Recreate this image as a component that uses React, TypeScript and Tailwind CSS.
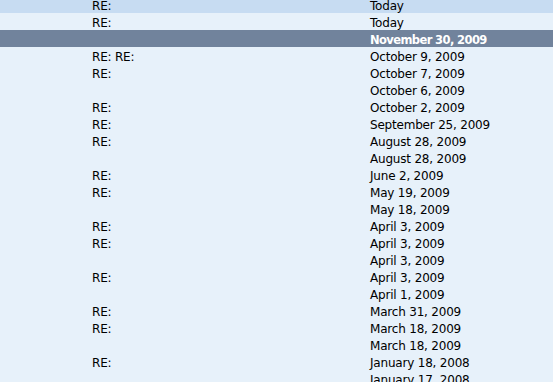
import React from 'react';

type Row = {
  subject: string;
  date: string;
};

const rows: Row[] = [
  { subject: 'RE:', date: 'Today' },
  { subject: 'RE:', date: 'Today' },
  { subject: '', date: 'November 30, 2009' },
  { subject: 'RE: RE:', date: 'October 9, 2009' },
  { subject: 'RE:', date: 'October 7, 2009' },
  { subject: '', date: 'October 6, 2009' },
  { subject: 'RE:', date: 'October 2, 2009' },
  { subject: 'RE:', date: 'September 25, 2009' },
  { subject: 'RE:', date: 'August 28, 2009' },
  { subject: '', date: 'August 28, 2009' },
  { subject: 'RE:', date: 'June 2, 2009' },
  { subject: 'RE:', date: 'May 19, 2009' },
  { subject: '', date: 'May 18, 2009' },
  { subject: 'RE:', date: 'April 3, 2009' },
  { subject: 'RE:', date: 'April 3, 2009' },
  { subject: '', date: 'April 3, 2009' },
  { subject: 'RE:', date: 'April 3, 2009' },
  { subject: '', date: 'April 1, 2009' },
  { subject: 'RE:', date: 'March 31, 2009' },
  { subject: 'RE:', date: 'March 18, 2009' },
  { subject: '', date: 'March 18, 2009' },
  { subject: 'RE:', date: 'January 18, 2008' },
  { subject: '', date: 'January 17, 2008' },
];

const SELECTED = 2;

const MessageList = () => {
  return (
    <div
      className="w-[553px] h-[382px] overflow-hidden bg-[#e7f1fa] text-[12px] text-black"
      style={{ fontFamily: '"DejaVu Sans", "Liberation Sans", sans-serif' }}
    >
      <div className="-mt-[4px] flex flex-col">
        {rows.map((row, i) => {
          const selected = i === SELECTED;
          const bg = selected
            ? 'bg-[#71839c] text-white font-bold text-[11.5px] tracking-[-0.6px]'
            : i === 0
              ? 'bg-[#c7dcf2] tracking-[-0.2px]'
              : 'tracking-[-0.2px]';
          return (
            <div key={i} className={`flex h-[17px] items-start pt-[3px] leading-[14px] ${bg}`}>
              <div className="w-[370px] shrink-0 pl-[92px] whitespace-nowrap">{row.subject}</div>
              <div className="whitespace-nowrap">{row.date}</div>
            </div>
          );
        })}
      </div>
    </div>
  );
};

export default MessageList;
